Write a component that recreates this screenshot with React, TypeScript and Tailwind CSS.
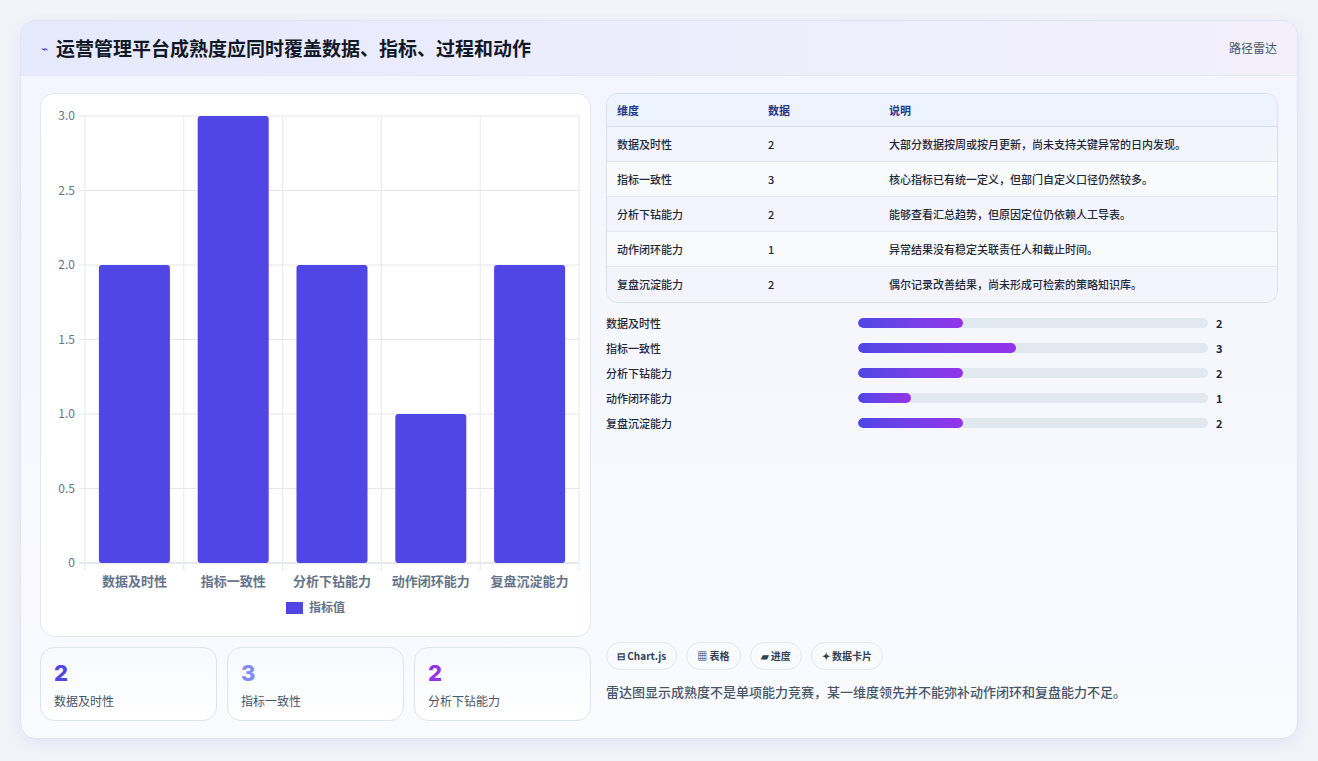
import React from "react";

const dims = [
  { n: "数据及时性", v: 2, d: "大部分数据按周或按月更新，尚未支持关键异常的日内发现。" },
  { n: "指标一致性", v: 3, d: "核心指标已有统一定义，但部门自定义口径仍然较多。" },
  { n: "分析下钻能力", v: 2, d: "能够查看汇总趋势，但原因定位仍依赖人工导表。" },
  { n: "动作闭环能力", v: 1, d: "异常结果没有稳定关联责任人和截止时间。" },
  { n: "复盘沉淀能力", v: 2, d: "偶尔记录改善结果，尚未形成可检索的策略知识库。" },
];

function Chart() {
  const x0 = 44, x1 = 538, y0 = 22, y1 = 469;
  const cw = (x1 - x0) / 5;
  const yt = [0, 0.5, 1, 1.5, 2, 2.5, 3];
  const yOf = (v: number) => y1 - (v / 3) * (y1 - y0);
  return (
    <svg width="550" height="541" className="block" style={{ fontFamily: "'Noto Sans CJK SC', sans-serif" }}>
      {yt.map((t) => (
        <g key={t}>
          <line x1={x0 - 6} x2={x1} y1={yOf(t)} y2={yOf(t)} stroke={t === 0 ? "#cbd5e1" : "#e5e7eb"} />
          <text x={x0 - 10} y={yOf(t) + 4} textAnchor="end" fontSize="12" fill="#64748b">{t === 0 ? "0" : t.toFixed(1)}</text>
        </g>
      ))}
      {[0, 1, 2, 3, 4, 5].map((i) => (
        <line key={i} x1={x0 + i * cw} x2={x0 + i * cw} y1={y0} y2={y1 + 8} stroke="#e5e7eb" />
      ))}
      {dims.map((d, i) => {
        const cx = x0 + i * cw + cw / 2;
        return (
          <g key={d.n}>
            <rect x={cx - 35.5} y={yOf(d.v)} width="71" height={y1 - yOf(d.v)} rx="3" fill="#4f46e5" />
            <text x={cx} y={492} textAnchor="middle" fontSize="13" fontWeight="600" fill="#64748b">{d.n}</text>
          </g>
        );
      })}
      <rect x="245" y="508" width="17" height="12" fill="#4f46e5" />
      <text x="268" y="518" fontSize="12" fontWeight="600" fill="#64748b">指标值</text>
    </svg>
  );
}

export default function App() {
  const stat = ["text-[#4f46e5]", "text-[#818cf8]", "text-[#9333ea]"];
  return (
    <div className="w-[1318px] h-[761px] bg-[#f1f3f8] p-[20px] pb-[22px]" style={{ fontFamily: "'Noto Sans CJK SC', 'Noto Sans', sans-serif" }}>
      <div className="h-[719px] rounded-[16px] border border-[#dfe3f3] bg-gradient-to-b from-[#f3f4fe] to-[#fafbff] shadow-[0_4px_14px_rgba(79,70,229,0.08)] overflow-hidden flex flex-col">
        <div className="h-[55px] flex items-center justify-between px-[20px] bg-gradient-to-r from-[#e6e9fc] to-[#f3f0fc] border-b border-[#e4e7f5]">
          <div className="flex items-center gap-[8px]">
            <span className="text-[#4f46e5] text-[12px]">⌁</span>
            <span className="text-[19px] font-bold text-[#111827]">运营管理平台成熟度应同时覆盖数据、指标、过程和动作</span>
          </div>
          <span className="text-[12px] text-[#475569]">路径雷达</span>
        </div>
        <div className="flex gap-[15px] px-[19px] pt-[17px]">
          <div className="w-[551px] flex flex-col gap-[10px]">
            <div className="h-[544px] rounded-[14px] bg-white border border-[#e2e8f0]">
              <Chart />
            </div>
            <div className="grid grid-cols-3 gap-[10px]">
              {dims.slice(0, 3).map((d, i) => (
                <div key={d.n} className="h-[74px] rounded-[14px] border border-[#dbe4f3] bg-gradient-to-b from-[#f7f9fd] to-white px-[13px] pt-[12px]">
                  <div className={`text-[22px] font-extrabold leading-[26px] ${stat[i]}`} style={{ fontFamily: "Inter, sans-serif" }}>{d.v}</div>
                  <div className="text-[12px] text-[#475569] mt-[6px]">{d.n}</div>
                </div>
              ))}
            </div>
          </div>
          <div className="flex-1 flex flex-col">
            <div className="rounded-[12px] border border-[#d7dff0] overflow-hidden bg-white text-[11px] text-[#1e293b]">
              <div className="h-[33px] flex items-center bg-[#eef4fe] border-b border-[#d7dff0] text-[#1e3a8a] font-semibold">
                <span className="w-[161px] pl-[10px]">维度</span>
                <span className="w-[121px]">数据</span>
                <span>说明</span>
              </div>
              {dims.map((d, i) => (
                <div key={d.n} className={`h-[35px] flex items-center font-medium ${i % 2 === 0 ? "bg-[#f3f4fd]" : "bg-[#f8fafc]"} ${i < 4 ? "border-b border-[#e2e8f0]" : ""}`}>
                  <span className="w-[161px] pl-[10px]">{d.n}</span>
                  <span className="w-[121px]">{d.v}</span>
                  <span>{d.d}</span>
                </div>
              ))}
            </div>
            <div className="flex flex-col mt-[10px] gap-[5px]">
              {dims.map((d) => (
                <div key={d.n} className="h-[20px] flex items-center text-[11px] font-medium text-[#1e293b]">
                  <span className="w-[252px]">{d.n}</span>
                  <div className="w-[350px] h-[10px] rounded-full bg-[#e2e8f0] overflow-hidden">
                    <div className="h-full rounded-full bg-gradient-to-r from-[#4f46e5] to-[#9333ea]" style={{ width: `${d.v * 15}%` }} />
                  </div>
                  <span className="ml-[8px] font-bold">{d.v}</span>
                </div>
              ))}
            </div>
            <div className="mt-auto flex gap-[9px] text-[10px] font-semibold text-[#334155]">
              {["⊟ Chart.js", "▦ 表格", "▰ 进度", "✦ 数据卡片"].map((c) => (
                <span key={c} className="h-[28px] px-[10px] flex items-center rounded-full border border-[#e2e8f0] bg-[#f8fafc]">{c}</span>
              ))}
            </div>
            <div className="mt-[12px] mb-[20px] text-[13px] text-[#475569] font-medium">雷达图显示成熟度不是单项能力竞赛，某一维度领先并不能弥补动作闭环和复盘能力不足。</div>
          </div>
        </div>
      </div>
    </div>
  );
}
